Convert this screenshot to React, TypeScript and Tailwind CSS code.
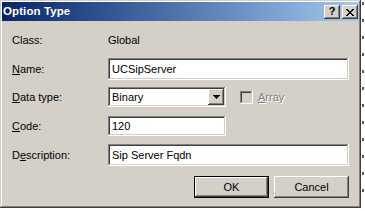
import React from 'react';

const windowFrame =
  'shadow-[inset_-1px_-1px_#404040,inset_1px_1px_#d4d0c8,inset_-2px_-2px_#808080,inset_2px_2px_#ffffff]';
const raised =
  'shadow-[inset_-1px_-1px_#404040,inset_1px_1px_#ffffff,inset_-2px_-2px_#808080,inset_2px_2px_#d4d0c8]';
const sunken =
  'shadow-[inset_-1px_-1px_#ffffff,inset_1px_1px_#808080,inset_-2px_-2px_#d4d0c8,inset_2px_2px_#404040]';

const Label: React.FC<{ pre?: string; u: string; rest: string }> = ({ pre = '', u, rest }) => (
  <span className="w-[96px] shrink-0 text-black">
    {pre}
    <u className="underline-offset-[1px]">{u}</u>
    {rest}
  </span>
);

const TextField: React.FC<{ value: string; className?: string }> = ({ value, className = '' }) => (
  <div className={`bg-white ${sunken} flex items-center pl-[4px] h-full ${className}`}>
    <span className="text-black">{value}</span>
  </div>
);

const CaptionButton: React.FC<{ children: React.ReactNode }> = ({ children }) => (
  <div className={`w-[16px] h-[14px] bg-[#d4d0c8] ${raised} flex items-center justify-center`}>
    {children}
  </div>
);

export default function App() {
  return (
    <div className="w-[365px] h-[211px] bg-white overflow-hidden flex font-['Liberation_Sans',Arial,sans-serif] text-[11px] leading-none">
      {/* dialog */}
      <div className={`w-[361px] h-[208px] shrink-0 bg-[#d4d0c8] p-[2px] flex flex-col ${windowFrame}`}>
        {/* title bar */}
        <div className="h-[19px] shrink-0 flex items-center bg-gradient-to-r from-[#0a246a] to-[#a6caf0] pl-[1px] pr-[1px]">
          <span className="text-white font-bold text-[11.5px] tracking-[0.1px]">Option Type</span>
          <div className="ml-auto flex gap-[2px] pt-[1px]">
            <CaptionButton>
              <span className="text-black font-bold text-[11px] leading-none -mt-[1px]">?</span>
            </CaptionButton>
            <CaptionButton>
              <svg width="8" height="7" viewBox="0 0 8 7" shapeRendering="crispEdges">
                <path
                  d="M0 0h2v1h1v1h2v-1h1v-1h2v1h-1v1h-1v1h-1v1h1v1h1v1h1v1h-2v-1h-1v-1h-2v1h-1v1h-2v-1h1v-1h1v-1h1v-1h-1v-1h-1v-1h-1z"
                  fill="#000"
                />
              </svg>
            </CaptionButton>
          </div>
        </div>

        {/* body */}
        <div className="flex flex-col pl-[10px] pr-[10px]">
          <div className="mt-[11px] h-[16px] flex items-center">
            <span className="w-[96px] shrink-0 text-black">Class:</span>
            <span className="text-black">Global</span>
          </div>

          <div className="mt-[10px] h-[22px] flex items-center">
            <Label u="N" rest="ame:" />
            <TextField value="UCSipServer" className="flex-1" />
          </div>

          <div className="mt-[7px] h-[20px] flex items-center">
            <Label u="D" rest="ata type:" />
            <div className={`w-[118px] h-full bg-white ${sunken} p-[2px] flex`}>
              <span className="flex-1 flex items-center pl-[2px] text-black">Binary</span>
              <div className={`w-[16px] h-full bg-[#d4d0c8] ${raised} flex items-center justify-center`}>
                <svg width="7" height="4" viewBox="0 0 7 4" shapeRendering="crispEdges">
                  <path d="M0 0h7v1h-1v1h-1v1h-1v1h-1v-1h-1v-1h-1v-1h-1z" fill="#000" />
                </svg>
              </div>
            </div>
            <div className={`ml-[14px] w-[13px] h-[13px] bg-[#d4d0c8] ${sunken}`} />
            <span className="ml-[5px] text-[#808080] [text-shadow:1px_1px_0_#ffffff]">
              <u className="underline-offset-[1px]">A</u>rray
            </span>
          </div>

          <div className="mt-[9px] h-[20px] flex items-center">
            <Label u="C" rest="ode:" />
            <TextField value="120" className="w-[118px]" />
          </div>

          <div className="mt-[8px] h-[22px] flex items-center">
            <Label pre="D" u="e" rest="scription:" />
            <TextField value="Sip Server Fqdn" className="flex-1" />
          </div>

          <div className="mt-[10px] h-[22px] flex justify-end gap-[5px]">
            <div className="w-[75px] h-full border border-black">
              <div className={`w-full h-full bg-[#d4d0c8] ${raised} flex items-center justify-center text-black`}>
                OK
              </div>
            </div>
            <div className={`w-[75px] h-full bg-[#d4d0c8] ${raised} flex items-center justify-center text-black`}>
              Cancel
            </div>
          </div>
        </div>
      </div>

      {/* window behind */}
      <div className="flex-1 flex flex-col items-start gap-[14px] pt-[2px] pl-[1px]">
        <span className="w-[2px] h-[3px] bg-[#606060]" />
        <span className="w-[2px] h-[3px] bg-[#606060]" />
        <span className="w-[2px] h-[3px] bg-[#606060]" />
        <span className="w-[2px] h-[3px] bg-[#606060]" />
        <span className="w-[2px] h-[3px] bg-[#606060]" />
        <span className="w-[2px] h-[3px] bg-[#606060]" />
        <span className="w-[2px] h-[3px] bg-[#606060]" />
        <span className="w-[2px] h-[3px] bg-[#606060]" />
        <span className="w-[2px] h-[3px] bg-[#606060]" />
        <span className="w-[2px] h-[3px] bg-[#606060]" />
        <span className="w-[2px] h-[3px] bg-[#606060]" />
        <span className="w-[2px] h-[3px] bg-[#606060]" />
      </div>
    </div>
  );
}
